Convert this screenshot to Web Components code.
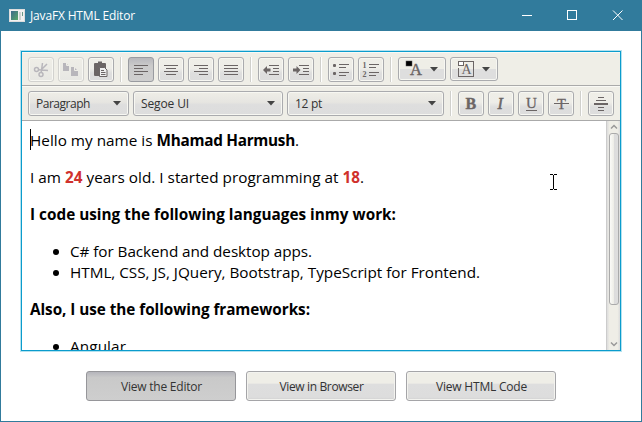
<!DOCTYPE html>
<html lang="en">
<head>
<meta charset="utf-8">
<title>JavaFX HTML Editor</title>
<style>
html,body{margin:0;padding:0;overflow:hidden}
body{font-family:"Open Sans","Noto Sans",sans-serif;font-size:12px;color:#333}
</style>
</head>
<body>
<app-window></app-window>

<template id="t-window">
<style>
:host{display:flex;flex-direction:column;position:relative;box-sizing:border-box;width:642px;height:422px;background:#fff;border:1px solid #317b9c;border-top:0}
title-bar{flex:none}
main{flex:1;display:flex;flex-direction:column;align-items:center;padding-top:20px}
nav{display:flex;gap:10px;margin-top:20px}
.pointer{position:absolute;left:549px;top:174px}
</style>
<title-bar></title-bar>
<main>
<html-editor></html-editor>
<nav>
<view-button class="on"><fit-text w="81">View the Editor</fit-text></view-button>
<view-button><fit-text w="84">View in Browser</fit-text></view-button>
<view-button><fit-text w="91">View HTML Code</fit-text></view-button>
</nav>
</main>
<svg class="pointer" width="8" height="16" shape-rendering="crispEdges"><path d="M0 .5h3M4 .5h3M0 15.5h3M4 15.5h3M3.5 1v14" stroke="#000" fill="none"/></svg>
</template>

<template id="t-title">
<style>
:host{display:flex;align-items:center;height:31px;background:#317b9c;color:#fff;padding-left:8px;box-sizing:border-box}
fit-text{margin:0 auto 0 5px;font-size:12px}
.ctl{margin-right:18px}
</style>
<svg width="16" height="14"><defs><linearGradient id="g" x2="1" y2="1"><stop offset="0" stop-color="#3c6a8c"/><stop offset="1" stop-color="#58a868"/></linearGradient></defs><rect x=".5" y=".5" width="15" height="12" fill="#f1f1f1" stroke="#ddd"/><rect x="2" y="2" width="7" height="9" fill="url(#g)"/><rect x="10" y="3" width="2" height="8" fill="#ccd2d0"/><rect x="13" y="3" width="1" height="4" fill="#6b9a88"/></svg>
<fit-text w="105">JavaFX HTML Editor</fit-text>
<svg class="ctl" width="101" height="11" fill="none" stroke="#fff"><path d="M0 5.500h10M45.500.5h9v9h-9z" shape-rendering="crispEdges"/><path d="M91 .5l9.500 9.500M100.500.5L91 10"/></svg>
</template>

<template id="t-editor">
<style>
:host{display:flex;flex-direction:column;box-sizing:border-box;width:600px;height:300px;border:1px solid #0b9ccd;box-shadow:0 0 0 1px #b4e2ef;background:#fff;overflow:hidden}
.row{display:flex;gap:4px;height:35px;box-sizing:border-box;background:#efeee7;border-top:1px solid #f9f9f5;border-bottom:1px solid #aaa;padding:4px 6px 0;flex:none}
.row.first{height:34px}
.content{display:flex;flex:1;min-height:0}
</style>
<div class="row first">
<tool-button icon="cut" class="off"></tool-button><tool-button icon="copy" class="off"></tool-button><tool-button icon="paste"></tool-button>
<tool-sep></tool-sep>
<tool-button icon="left" class="on"></tool-button><tool-button icon="center"></tool-button><tool-button icon="right"></tool-button><tool-button icon="full"></tool-button>
<tool-sep></tool-sep>
<tool-button icon="outdent"></tool-button><tool-button icon="indent"></tool-button>
<tool-sep></tool-sep>
<tool-button icon="bullets"></tool-button><tool-button icon="numbers"></tool-button>
<tool-sep></tool-sep>
<tool-button icon="fore" class="wide"></tool-button><tool-button icon="back" class="wide"></tool-button>
</div>
<div class="row">
<combo-box style="width:101px"><fit-text w="54">Paragraph</fit-text></combo-box>
<combo-box style="width:150px"><fit-text w="48">Segoe UI</fit-text></combo-box>
<combo-box style="width:157px"><fit-text w="27">12 pt</fit-text></combo-box>
<tool-sep></tool-sep>
<tool-button icon="bold"></tool-button><tool-button icon="italic"></tool-button><tool-button icon="under"></tool-button><tool-button icon="strike"></tool-button>
<tool-sep></tool-sep>
<tool-button icon="rule"></tool-button>
</div>
<div class="content"><rich-doc></rich-doc><scroll-bar></scroll-bar></div>
</template>

<template id="t-doc">
<style>
:host{display:block;position:relative;flex:1;overflow:hidden;padding:0 8px;font-size:15.3px;line-height:21px;color:#000}
p{margin:9px 0 16px;height:21px}
p + p,ul + p{margin-top:0}
ul{list-style:none;margin:0 0 16px;padding:0 0 0 23px}
li{display:flex;align-items:center;gap:11px;height:21px}
li::before{content:"";width:6px;height:6px;border-radius:50%;background:#000}
b.red{color:#d0312d}
.caret{position:absolute;left:8px;top:8px;width:1px;height:21px;background:#000}
</style>
<i class="caret"></i>
<p><fit-text w="126.500">Hello my name is </fit-text><fit-text w="138.500"><b>Mhamad Harmush</b></fit-text>.</p>
<p><fit-text w="334">I am <b class="red">24</b> years old. I started programming at <b class="red">18</b>.</fit-text></p>
<p><fit-text w="366"><b>I code using the following languages inmy work:</b></fit-text></p>
<ul><li><fit-text w="242">C# for Backend and desktop apps.</fit-text></li><li><fit-text w="410">HTML, CSS, JS, JQuery, Bootstrap, TypeScript for Frontend.</fit-text></li></ul>
<p><fit-text w="280"><b>Also, I use the following frameworks:</b></fit-text></p>
<ul><li><fit-text w="56">Angular</fit-text></li></ul>
</template>

<template id="t-scroll">
<style>
:host{display:flex;flex-direction:column;align-items:center;box-sizing:border-box;width:14px;background:linear-gradient(90deg,#dcdcdc,#efeee7 20%,#efeee7 80%,#dcdcdc);border-left:1px solid #ccc}
svg{flex:none}
i{box-sizing:border-box;width:10px;height:172px;border:1px solid #aaa;border-radius:3px;background:linear-gradient(90deg,#fbfbf8,#eeeee8 45%,#dcdcdc 50%,#dedede);margin-bottom:auto}
</style>
<svg width="12" height="12" fill="none" stroke="#999" stroke-width="1.500"><path d="M3 7.500l3-3 3 3"/></svg><i></i><svg width="12" height="12" fill="none" stroke="#999" stroke-width="1.500"><path d="M3 4.500l3 3 3-3"/></svg>
</template>

<script>
const icons = {
cut:'<g fill="none" stroke="currentColor" stroke-width="1.500"><circle cx="8.500" cy="12.500" r="2"/><circle cx="13" cy="17.500" r="2"/><path d="M10.500 12.800L20 13.500M13.200 15.500L14.500 6M14 12l5-5"/></g>',
copy:'<path d="M5 6h3l3 3v5H5zM13 10h3l4 4v5h-7z"/><path d="M8.500 5.500v3H12M16.500 10v3.500H20" stroke="#efeee7" fill="none"/>',
paste:'<rect x="6" y="6" width="12" height="13" rx="1"/><path d="M8 8V6h2V4.500h4V6h2v2z"/><path d="M11.500 10.500h5l2.500 2.500v6.500h-7.500z" fill="#eee" stroke="currentColor"/><path d="M13 13.500h3M13 15.500h4.500M13 17.500h4.500" stroke="currentColor"/>',
left:'<path d="M6 8.500h14M6 11.500h9M6 14.500h14M6 17.500h9" class="l"/>',
center:'<path d="M6 8.500h14M8 11.500h10M6 14.500h14M8 17.500h10" class="l"/>',
right:'<path d="M6 8.500h14M11 11.500h9M6 14.500h14M11 17.500h9" class="l"/>',
full:'<path d="M6 8.500h14M6 11.500h14M6 14.500h14M6 17.500h14" class="l"/>',
outdent:'<path d="M11 8.500h10M15 11.500h6M15 14.500h6M11 17.500h10" class="l"/><path d="M5 13l4-4v2.500h3.500v3H9V17z"/>',
indent:'<path d="M11 8.500h10M15 11.500h6M15 14.500h6M11 17.500h10" class="l"/><path d="M12.500 13L8.500 9v2.500H5v3h3.500V17z"/>',
bullets:'<path d="M11 7.500h10M11 10.500h7M11 15.500h10M11 18.500h7" class="l"/><rect x="5" y="7" width="3" height="3" rx="1"/><rect x="5" y="15" width="3" height="3" rx="1"/>',
numbers:'<path d="M11 7.500h10M11 10.500h7M11 15.500h10M11 18.500h7" class="l"/><text x="4.500" y="11" font-size="8" font-weight="bold">1</text><text x="4.500" y="20" font-size="8" font-weight="bold">2</text>',
fore:'<text x="12" y="18" font-size="16.500" stroke="currentColor" stroke-width=".4">A</text><rect x="8" y="4" width="6" height="5" fill="#000" stroke="#555" stroke-width=".5"/><path d="M32 10h8l-4 4.500z" fill="#444"/>',
back:'<path d="M14 4.500h9.500v15h-15V11" class="l"/><text x="11.500" y="17" font-size="14">A</text><rect x="8.500" y="4.500" width="5" height="4" fill="#fff" stroke="#6b6565"/><path d="M32 10h8l-4 4.500z" fill="#444"/>',
bold:'<text x="7.500" y="18" font-size="16" font-weight="bold" stroke="currentColor" stroke-width=".4">B</text>',
italic:'<text x="9.500" y="18" font-size="16" font-style="italic" stroke="currentColor" stroke-width=".5">I</text>',
under:'<text x="8" y="17" font-size="15" stroke="currentColor" stroke-width=".3">U</text><path d="M8 19.500h11" class="l"/>',
strike:'<text x="9" y="18" font-size="14.500" stroke="currentColor" stroke-width=".3">T</text><path d="M6 12.500h15" class="l"/>',
rule:'<path d="M10 6.500h6M8 9.500h10M10 16.500h6M10 19.500h6" class="l"/><path d="M6 12h14v2H6z"/>'
};
function stamp(el, id){ el.attachShadow({mode:'open'}).append(document.getElementById(id).content.cloneNode(true)); }
const fromTemplate = id => class extends HTMLElement { constructor(){ super(); stamp(this, id); } };

/* Inline text whose tracking adapts so the run fills the width in `w`. */
class FitText extends HTMLElement {
  connectedCallback(){
    if(!this.shadowRoot) this.attachShadow({mode:'open'}).innerHTML = '<style>:host{display:inline-block;white-space:pre}</style><slot></slot>';
    this.style.letterSpacing = '0';
    const n = this.textContent.length, w = this.getBoundingClientRect().width;
    if(n) this.style.letterSpacing = ((+this.getAttribute('w') - w) / n).toFixed(4) + 'px';
  }
}
class ToolButton extends HTMLElement {
  connectedCallback(){
    const wide = this.classList.contains('wide');
    this.attachShadow({mode:'open'}).innerHTML = `<style>
:host{display:block;box-sizing:border-box;width:26px;height:25px;border:1px solid #aaabae;border-radius:3px;background:linear-gradient(#efeee7,#eeede8 45%,#dedede 65%,#ddd);box-shadow:inset 0 0 0 1px #f7f7f2;color:#6b6565;font-family:"Liberation Serif",serif;flex:none}
:host(.wide){width:48px;height:24px;background:linear-gradient(#efeee7 48%,#dedede 52%)}
:host(.on){background:linear-gradient(#b8b8bd,#cbcbcb 35%,#cfcfcf);box-shadow:none;border-color:#999ba0}
:host(.off){border-color:#d2d2cf;color:#b8b6bb;background:linear-gradient(#efeee7,#e7e7e3)}
svg{display:block;margin:-1px;fill:currentColor}
.l{stroke:currentColor;fill:none;shape-rendering:crispEdges}
</style><svg width="${wide?48:26}" height="25">${icons[this.getAttribute('icon')]}</svg>`;
  }
}
class ToolSep extends HTMLElement {
  constructor(){ super(); this.attachShadow({mode:'open'}).innerHTML = '<style>:host{display:flex;justify-content:center;width:6px;height:25px;flex:none}i{width:1px;background:#d0d0cc;border-right:1px solid #fff}</style><i></i>'; }
}
class ComboBox extends HTMLElement {
  constructor(){ super(); this.attachShadow({mode:'open'}).innerHTML = `<style>
:host{display:flex;align-items:center;justify-content:space-between;box-sizing:border-box;height:25px;border:1px solid #aaabae;border-radius:3px;background:linear-gradient(#efeee7,#e6e5e1 45%,#dedede 55%,#ddd);box-shadow:inset 0 0 0 1px #f7f7f2;padding:0 7px;flex:none}
</style><slot></slot><svg width="8" height="5"><path d="M0 0h8L4 4.500z" fill="#444"/></svg>`; }
}
class ViewButton extends HTMLElement {
  constructor(){ super(); this.attachShadow({mode:'open'}).innerHTML = `<style>
:host{display:flex;align-items:center;justify-content:center;box-sizing:border-box;width:150px;height:30px;border:1px solid #a5a5a8;border-radius:3px;background:linear-gradient(#efeee7 40%,#dedede 43%,#ddd 90%,#d0d0d0);box-shadow:inset 0 0 0 1px #f3f3ef;padding:1px 0 0 1px}
:host(.on){background:linear-gradient(#b5b5bb,#c9c9c9 20%,#cecece);box-shadow:none;border-color:#96969a}
</style><slot></slot>`; }
}
customElements.define('fit-text', FitText);
customElements.define('tool-button', ToolButton);
customElements.define('tool-sep', ToolSep);
customElements.define('combo-box', ComboBox);
customElements.define('view-button', ViewButton);
customElements.define('scroll-bar', fromTemplate('t-scroll'));
customElements.define('rich-doc', fromTemplate('t-doc'));
customElements.define('html-editor', fromTemplate('t-editor'));
customElements.define('title-bar', fromTemplate('t-title'));
customElements.define('app-window', fromTemplate('t-window'));
</script>
</body>
</html>
